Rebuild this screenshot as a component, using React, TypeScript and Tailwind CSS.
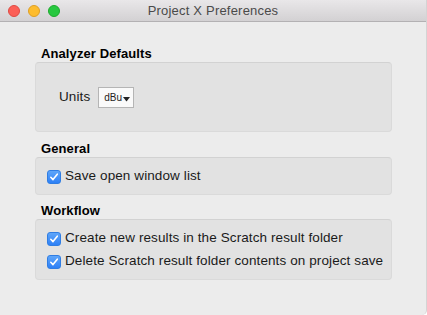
import React from 'react';

const font = { fontFamily: '"Liberation Sans", Arial, sans-serif' };

function TrafficLight({ color, ring }: { color: string; ring: string }) {
  return <span className={`block w-[12px] h-[12px] rounded-full border-[0.5px] ${color} ${ring}`} />;
}

function Checkbox({ label }: { label: string }) {
  return (
    <label className="flex items-center h-[23px] gap-[4px]">
      <span className="w-[14px] h-[14px] rounded-[3px] bg-gradient-to-b from-[#5ea5f9] to-[#2d80f6] border border-[#2f7de3] flex items-center justify-center">
        <svg width="10" height="10" viewBox="0 0 10 10" fill="none">
          <path d="M1.8 5.3 L4 7.6 L8.3 2.2" stroke="white" strokeWidth="1.6" strokeLinecap="round" strokeLinejoin="round" />
        </svg>
      </span>
      <span className="text-[13.5px] tracking-[0.1px] text-[#1a1a1a]">{label}</span>
    </label>
  );
}

function Section({ title, className, children }: { title: string; className?: string; children: React.ReactNode }) {
  return (
    <section className={className}>
      <h2 className="h-[16px] leading-[16px] pl-[6px] text-[13px] tracking-[0.1px] font-bold text-black">{title}</h2>
      <div className="rounded-[4px] bg-[#e2e2e2] border border-[#dadada] border-t-[#d2d2d2]">{children}</div>
    </section>
  );
}

export default function App() {
  return (
    <div className="w-[427px] h-[315px] bg-white" style={font}>
      <div className="w-full h-full flex flex-col bg-[#ececec] border-r border-[#d4d4d4] rounded-br-[5px] overflow-hidden">
        <div className="relative h-[22px] shrink-0 bg-gradient-to-b from-[#e9e7e9] to-[#d3d1d3] border-b border-[#b3b1b3] flex items-center justify-center">
          <div className="absolute left-[8px] top-[5px] flex gap-[8px]">
            <TrafficLight color="bg-[#fc5f57]" ring="border-[#df4a43]" />
            <TrafficLight color="bg-[#fdbc2e]" ring="border-[#de9f25]" />
            <TrafficLight color="bg-[#28c840]" ring="border-[#1daa2c]" />
          </div>
          <span className="text-[13px] tracking-[0.2px] text-[#4a4a4a]">Project X Preferences</span>
        </div>

        <div className="pt-[24px] pl-[35px] pr-[34px]">
          <Section title="Analyzer Defaults">
            <div className="h-[68px] flex items-center pl-[23px] gap-[8px]">
              <span className="text-[13.5px] tracking-[0.1px] text-[#1a1a1a]">Units</span>
              <div className="relative w-[36px] h-[21px] bg-[#fafafa] border border-[#b5b5b5] flex items-center pl-[5px]">
                <span className="text-[10px] text-[#222]">dBu</span>
                <svg className="absolute right-[3px] top-[9px]" width="7" height="5" viewBox="0 0 7 5">
                  <path d="M0 0 H7 L3.5 4.5 Z" fill="#222" />
                </svg>
              </div>
            </div>
          </Section>

          <Section title="General" className="mt-[9px]">
            <div className="pl-[11px] pt-[7px] pb-[6px]">
              <Checkbox label="Save open window list" />
            </div>
          </Section>

          <Section title="Workflow" className="mt-[8px]">
            <div className="pl-[11px] pt-[7px] pb-[6px]">
              <Checkbox label="Create new results in the Scratch result folder" />
              <Checkbox label="Delete Scratch result folder contents on project save" />
            </div>
          </Section>
        </div>
      </div>
    </div>
  );
}
